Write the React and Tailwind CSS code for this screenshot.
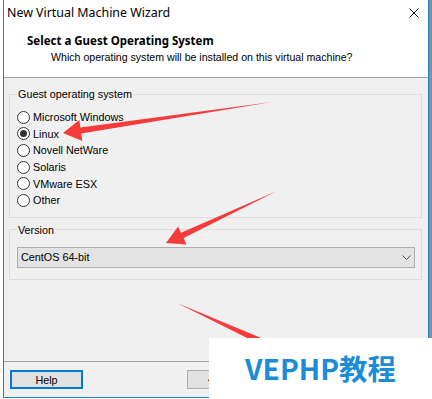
import React from "react";

function Radio({ label, checked }) {
  return (
    <div className="h-[16.6px] flex items-center">
      <span className="w-[13px] h-[13px] rounded-full border border-[#333333] bg-white flex items-center justify-center shrink-0">
        {checked && <span className="w-[7px] h-[7px] rounded-full bg-[#333333]" />}
      </span>
      <span className="ml-[3px] leading-[16px]">{label}</span>
    </div>
  );
}

export default function App() {
  const options = ["Microsoft Windows", "Linux", "Novell NetWare", "Solaris", "VMware ESX", "Other"];
  return (
    <div className="w-[432px] h-[399px] relative overflow-hidden bg-white flex font-['Liberation_Sans',sans-serif] text-[10.8px] text-black">
      <div className="w-[3px] shrink-0" />
      <div className="w-[426px] h-[398px] shrink-0 flex flex-col border-x border-b border-[#1883d7]">
        {/* title bar */}
        <div className="h-[26px] bg-white flex items-center justify-between pl-[3px] pr-[9px]">
          <span className="font-['Noto_Sans',sans-serif] text-[12.4px] leading-[16px]">New Virtual Machine Wizard</span>
          <svg width="10" height="10" viewBox="0 0 10 10">
            <path d="M0.5 0.5 L9.5 9.5 M9.5 0.5 L0.5 9.5" stroke="#111" strokeWidth="1" fill="none" />
          </svg>
        </div>
        {/* header */}
        <div className="h-[51px] bg-white pl-[23px] pt-[7px] flex flex-col">
          <span className="font-['Noto_Sans',sans-serif] font-bold text-[11.5px] leading-[16px]">Select a Guest Operating System</span>
          <span className="pl-[24px] text-[10.6px] leading-[16px]">Which operating system will be installed on this virtual machine?</span>
        </div>
        <div className="h-[1px] bg-[#a0a0a0]" />
        {/* body */}
        <div className="flex-1 bg-[#f0f0f0] flex flex-col pl-[5px] pr-[6px]">
          <fieldset className="mt-[8px] border border-[#dcdcdc] pl-[7px] pr-[6px] pt-[7px] pb-[8px]">
            <legend className="px-[1px] leading-[16px]">Guest operating system</legend>
            {options.map((o) => (
              <Radio key={o} label={o} checked={o === "Linux"} />
            ))}
          </fieldset>
          <fieldset className="mt-[4px] border border-[#dcdcdc] pl-[7px] pr-[6px] pt-[9px] pb-[11px]">
            <legend className="px-[1px] leading-[16px]">Version</legend>
            <div className="h-[21px] border border-[#adadad] bg-[#e3e3e3] flex items-center justify-between pl-[3px] pr-[3px]">
              <span className="leading-[16px]">CentOS 64-bit</span>
              <svg width="9" height="5" viewBox="0 0 9 5">
                <path d="M0.5 0.5 L4.5 4.5 L8.5 0.5" stroke="#555" strokeWidth="1" fill="none" />
              </svg>
            </div>
          </fieldset>
        </div>
        <div className="h-[1px] bg-[#a0a0a0]" />
        {/* buttons */}
        <div className="h-[35px] bg-[#f0f0f0] flex items-start pt-[8px] pl-[6px]">
          <div className="w-[73px] h-[19px] border-2 border-[#0078d7] bg-[#e1e1e1] flex items-center justify-center leading-[14px]">
            Help
          </div>
          <div className="ml-[104px] w-[75px] h-[19px] border border-[#adadad] bg-[#e1e1e1] flex items-center justify-center leading-[14px]">
            &lt; Back
          </div>
        </div>
      </div>
      <div className="w-[3px] shrink-0 bg-[#8c8c8c]" />

      {/* annotation arrows */}
      <svg className="absolute left-0 top-0 pointer-events-none" width="432" height="399" viewBox="0 0 432 399">
        <polygon
          points="63,133 82.3,141 81.2,133.4 272,102 80.4,127.4 79.3,120"
          fill="#f63b3b"
        />
        <polygon
          points="166,243 186.5,244.4 183.6,238.1 277,191 181,232.7 178.1,226.4"
          fill="#f63b3b"
        />
        <polygon points="177,303 281.6,346.4 278.4,353.6" fill="#f63b3b" />
      </svg>

      {/* watermark */}
      <div className="absolute left-[209px] top-[338px] w-[223px] h-[61px] bg-white flex items-center pl-[36px]">
        <span className="font-['Noto_Sans_CJK_SC',sans-serif] font-bold text-[28.3px] leading-none text-[#1b8dd6]">
          VEPHP教程
        </span>
      </div>
    </div>
  );
}
